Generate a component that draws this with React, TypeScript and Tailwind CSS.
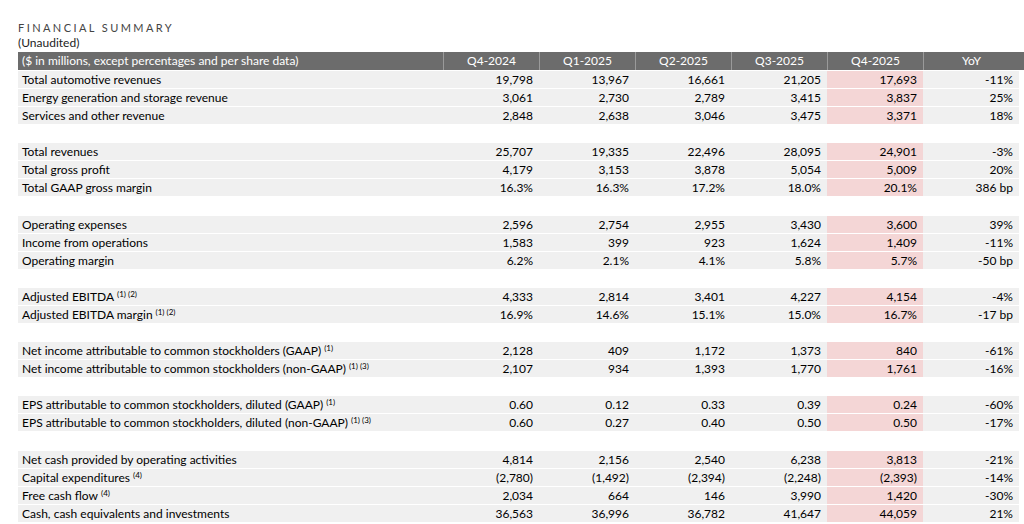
const COLS = ["Q4-2024", "Q1-2025", "Q2-2025", "Q3-2025", "Q4-2025", "YoY"];

type Row = { label: string; notes?: string; values: string[] };

const GROUPS: Row[][] = [
  [
    { label: "Total automotive revenues", values: ["19,798", "13,967", "16,661", "21,205", "17,693", "-11%"] },
    { label: "Energy generation and storage revenue", values: ["3,061", "2,730", "2,789", "3,415", "3,837", "25%"] },
    { label: "Services and other revenue", values: ["2,848", "2,638", "3,046", "3,475", "3,371", "18%"] },
  ],
  [
    { label: "Total revenues", values: ["25,707", "19,335", "22,496", "28,095", "24,901", "-3%"] },
    { label: "Total gross profit", values: ["4,179", "3,153", "3,878", "5,054", "5,009", "20%"] },
    { label: "Total GAAP gross margin", values: ["16.3%", "16.3%", "17.2%", "18.0%", "20.1%", "386 bp"] },
  ],
  [
    { label: "Operating expenses", values: ["2,596", "2,754", "2,955", "3,430", "3,600", "39%"] },
    { label: "Income from operations", values: ["1,583", "399", "923", "1,624", "1,409", "-11%"] },
    { label: "Operating margin", values: ["6.2%", "2.1%", "4.1%", "5.8%", "5.7%", "-50 bp"] },
  ],
  [
    { label: "Adjusted EBITDA", notes: "(1) (2)", values: ["4,333", "2,814", "3,401", "4,227", "4,154", "-4%"] },
    { label: "Adjusted EBITDA margin", notes: "(1) (2)", values: ["16.9%", "14.6%", "15.1%", "15.0%", "16.7%", "-17 bp"] },
  ],
  [
    { label: "Net income attributable to common stockholders (GAAP)", notes: "(1)", values: ["2,128", "409", "1,172", "1,373", "840", "-61%"] },
    { label: "Net income attributable to common stockholders (non-GAAP)", notes: "(1) (3)", values: ["2,107", "934", "1,393", "1,770", "1,761", "-16%"] },
  ],
  [
    { label: "EPS attributable to common stockholders, diluted (GAAP)", notes: "(1)", values: ["0.60", "0.12", "0.33", "0.39", "0.24", "-60%"] },
    { label: "EPS attributable to common stockholders, diluted (non-GAAP)", notes: "(1) (3)", values: ["0.60", "0.27", "0.40", "0.50", "0.50", "-17%"] },
  ],
  [
    { label: "Net cash provided by operating activities", values: ["4,814", "2,156", "2,540", "6,238", "3,813", "-21%"] },
    { label: "Capital expenditures", notes: "(4)", values: ["(2,780)", "(1,492)", "(2,394)", "(2,248)", "(2,393)", "-14%"] },
    { label: "Free cash flow", notes: "(4)", values: ["2,034", "664", "146", "3,990", "1,420", "-30%"] },
    { label: "Cash, cash equivalents and investments", values: ["36,563", "36,996", "36,782", "41,647", "44,059", "21%"] },
  ],
];

// spacer above each group (first one sits right under the header)
const GAPS = ["", "mt-[18px]", "mt-[19px]", "mt-[18px]", "mt-[18px]", "mt-[18px]", "mt-[19px]"];

const grid = "grid grid-cols-[425px_repeat(6,96px)]";

function DataRow({ row }: { row: Row }) {
  return (
    <div className={`${grid} h-[18px] border-t border-white text-[12px] leading-[17px] text-black`}>
      <div className="bg-[#f0f0f0] pl-1 whitespace-nowrap">
        {row.label}
        {row.notes && <sup className="ml-[3px] text-[8px]">{row.notes}</sup>}
      </div>
      {row.values.map((v, i) => (
        <div
          key={i}
          className={`${i === 4 ? "bg-[#f4d6d6]" : "bg-[#f0f0f0]"} pr-[6px] text-right`}
        >
          {v}
        </div>
      ))}
    </div>
  );
}

export default function App() {
  return (
    <div className="w-[1024px] h-[524px] bg-white pl-[18px] pt-[21px] font-['Lato',sans-serif]">
      <div className="text-[11px] leading-[13px] tracking-[0.22em] text-[#444]">
        FINANCIAL SUMMARY
      </div>
      <div className="text-[12px] leading-[18px] text-[#222]">(Unaudited)</div>
      <div className={`${grid} h-[18px] bg-[#6c6c6c] text-[12px] leading-[18px] text-white`}>
        <div className="pl-1 whitespace-nowrap">($ in millions, except percentages and per share data)</div>
        {COLS.map((c) => (
          <div key={c} className="border-l border-[#9a9a9a] text-center">
            {c}
          </div>
        ))}
      </div>
      {GROUPS.map((g, gi) => (
        <div key={gi} className={GAPS[gi]}>
          {g.map((r) => (
            <DataRow key={r.label} row={r} />
          ))}
        </div>
      ))}
    </div>
  );
}
